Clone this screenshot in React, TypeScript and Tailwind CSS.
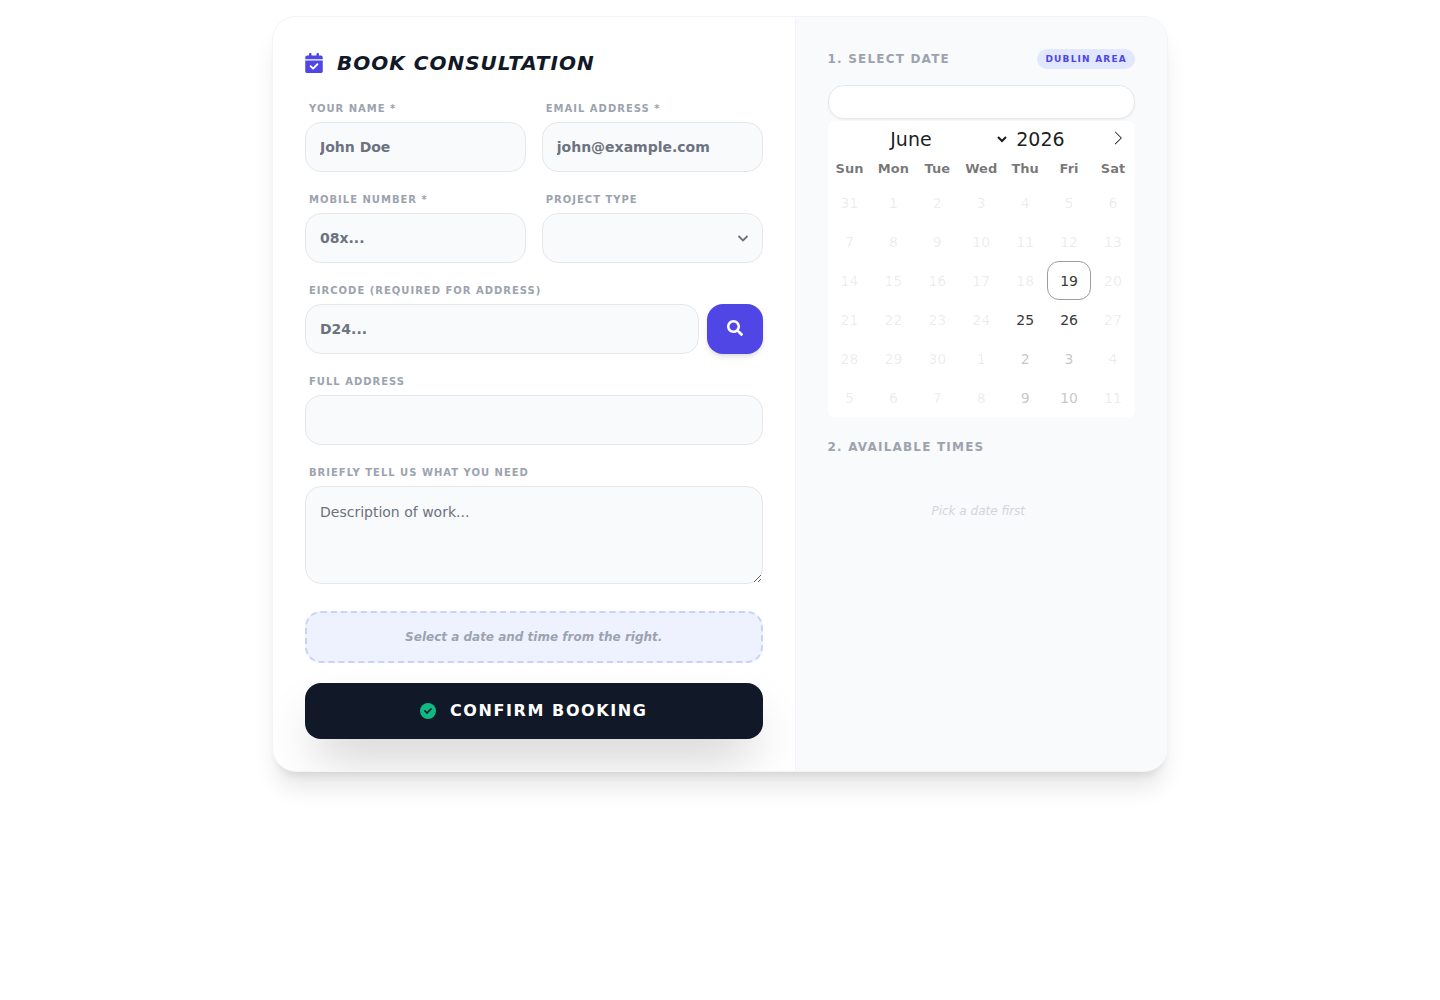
import type { ReactNode } from 'react';
import { FaSearch } from 'react-icons/fa';
import { FaCalendarCheck } from 'react-icons/fa6';

const MONTHS = ['June', 'July', 'August', 'September', 'October', 'November', 'December'];
const WEEKDAYS = ['Sun', 'Mon', 'Tue', 'Wed', 'Thu', 'Fri', 'Sat'];

const FIELD =
  'block w-full rounded-2xl border border-[#e5e7eb] bg-[#f9fafb] p-3.5 text-sm text-[#111827] outline-none placeholder:text-[#6b7280]';

type DayState = 'disabled' | 'open' | 'next' | 'today';

interface Day {
  key: number;
  label: number;
  state: DayState;
}

const DAY_STYLES: Record<DayState, string> = {
  disabled: 'border-transparent text-[#393939]/10',
  open: 'border-transparent text-[#393939]',
  next: 'border-transparent text-[#393939]/30',
  today: 'border-[#959ea9] text-[#393939]',
};

/** Six weeks starting on Sunday 31 May 2026; only Thursdays and Fridays from the 19th on are bookable. */
const WEEKS: Day[][] = Array.from({ length: 6 }, (_, week) =>
  Array.from({ length: 7 }, (_, weekday) => {
    const offset = week * 7 + weekday;
    const label = offset === 0 ? 31 : offset > 30 ? offset - 30 : offset;
    const bookable = offset >= 19 && (weekday === 4 || weekday === 5);
    let state: DayState = 'disabled';
    if (offset === 19) state = 'today';
    else if (bookable) state = offset > 30 ? 'next' : 'open';
    return { key: offset, label, state };
  }),
);

function Field({ id, label, children }: { id: string; label: string; children: ReactNode }) {
  return (
    <div className="min-w-0">
      <label
        htmlFor={id}
        className="mb-1.5 ml-1 block text-[10px] leading-[15px] font-bold tracking-widest text-[#9ca3af] uppercase"
      >
        {label}
      </label>
      {children}
    </div>
  );
}

function Calendar() {
  return (
    <div className="mt-0.5 rounded-md bg-white">
      <div className="relative flex h-[34px] items-center justify-center pt-0.5 text-[19px] leading-6 text-black/90">
        <select aria-label="Month" defaultValue="June" className="bg-transparent pr-0.5 indent-1 outline-none">
          {MONTHS.map((month) => (
            <option key={month}>{month}</option>
          ))}
        </select>
        <input
          type="text"
          inputMode="numeric"
          aria-label="Year"
          defaultValue="2026"
          className="ml-1.5 w-16 bg-transparent outline-none"
        />
        <button type="button" aria-label="Next month" className="absolute top-0 right-0 p-2.5">
          <svg viewBox="0 0 17 17" className="h-3.5 w-3.5 fill-black/90">
            <path d="M13.207 8.472l-7.854 7.854-0.707-0.707 7.146-7.146-7.146-7.148 0.707-0.707 7.854 7.854z" />
          </svg>
        </button>
      </div>
      <table className="w-full table-fixed border-collapse text-center">
        <thead>
          <tr className="h-7">
            {WEEKDAYS.map((name) => (
              <th key={name} className="p-0 text-[13px] leading-4 font-bold text-black/54">
                {name}
              </th>
            ))}
          </tr>
        </thead>
        <tbody>
          {WEEKS.map((week) => (
            <tr key={week[0].key}>
              {week.map(({ key, label, state }) => (
                <td key={key} className="p-0">
                  <button
                    type="button"
                    disabled={state === 'disabled'}
                    className={`block h-[39px] w-full rounded-xl border text-sm ${DAY_STYLES[state]}`}
                  >
                    {label}
                  </button>
                </td>
              ))}
            </tr>
          ))}
        </tbody>
      </table>
    </div>
  );
}

function BookingForm() {
  return (
    <form className="p-8 md:col-span-7" onSubmit={(event) => event.preventDefault()}>
      <h1 className="mb-6 flex items-center gap-3.5 text-xl leading-7 font-bold tracking-wider text-[#111827] uppercase italic">
        <FaCalendarCheck aria-hidden className="h-5 w-[18px] text-[#4f46e5]" />
        Book Consultation
      </h1>
      <div className="space-y-5">
        <div className="grid grid-cols-1 gap-x-4 gap-y-5 sm:grid-cols-2">
          <Field id="name" label="Your Name *">
            <input id="name" type="text" placeholder="John Doe" className={`${FIELD} font-bold`} />
          </Field>
          <Field id="email" label="Email Address *">
            <input id="email" type="email" placeholder="john@example.com" className={`${FIELD} font-bold`} />
          </Field>
          <Field id="mobile" label="Mobile Number *">
            <input id="mobile" type="tel" placeholder="08x..." className={`${FIELD} font-bold`} />
          </Field>
          <Field id="project" label="Project Type">
            <div className="relative">
              <select id="project" className={`${FIELD} h-[50px] appearance-none font-bold`} />
              <svg
                aria-hidden
                viewBox="0 0 12 12"
                className="pointer-events-none absolute top-5 right-3.5 h-3 w-3 fill-none stroke-[#6b7280]"
              >
                <path d="M1.5 3L6 7.5 10.5 3" strokeWidth="1.8" />
              </svg>
            </div>
          </Field>
        </div>
        <Field id="eircode" label="Eircode (Required for Address)">
          <div className="flex gap-2">
            <input id="eircode" type="text" placeholder="D24..." className={`${FIELD} font-bold`} />
            <button
              type="button"
              aria-label="Find address"
              className="flex w-14 shrink-0 items-center justify-center rounded-2xl bg-[#4f46e5] pb-0.5 text-white shadow-md"
            >
              <FaSearch aria-hidden className="h-4 w-4" />
            </button>
          </div>
        </Field>
        <Field id="address" label="Full Address">
          <input id="address" type="text" className={`${FIELD} font-bold`} />
        </Field>
        <Field id="details" label="Briefly tell us what you need">
          <textarea
            id="details"
            placeholder="Description of work..."
            className={`${FIELD} h-[98px] leading-[22px]`}
          />
        </Field>
      </div>
      <p className="mt-[27px] rounded-2xl border-2 border-dashed border-[#c7d2fe] bg-[#eef2ff] p-4 text-center text-xs font-bold text-[#9ca3af] italic">
        Select a date and time from the right.
      </p>
      <button
        type="submit"
        className="mt-5 flex w-full items-center justify-center gap-3.5 rounded-2xl bg-[#111827] p-4 text-base font-bold tracking-widest text-white uppercase shadow-2xl"
      >
        <svg aria-hidden viewBox="0 0 512 512" className="h-4 w-4">
          <circle cx="256" cy="256" r="256" className="fill-[#10b981]" />
          <path
            d="M160 256l64 64 128-128"
            className="fill-none stroke-[#111827]"
            strokeWidth="56"
            strokeLinecap="round"
            strokeLinejoin="round"
          />
        </svg>
        Confirm Booking
      </button>
    </form>
  );
}

function SchedulePanel() {
  return (
    <section className="border-l border-[#f3f4f6] bg-[#f9fafb] p-8 md:col-span-5">
      <h2 className="mb-4 flex items-center justify-between text-xs font-bold tracking-widest text-[#9ca3af] uppercase">
        1. Select Date
        <span className="rounded-full bg-[#e0e7ff] px-2 py-1 text-[9px] leading-3 text-[#4f46e5]">Dublin Area</span>
      </h2>
      <input
        type="text"
        readOnly
        aria-label="Selected date"
        className="block h-[34px] w-full rounded-2xl border border-[#e5e7eb] bg-white px-4 text-sm shadow-xs outline-none"
      />
      <Calendar />
      <h2 className="mt-[22px] text-xs font-bold tracking-widest text-[#9ca3af] uppercase">2. Available Times</h2>
      <p className="mt-12 pr-1.5 text-center text-xs text-[#d1d5db] italic">Pick a date first</p>
    </section>
  );
}

export default function App() {
  return (
    <main className="min-h-screen bg-white p-4 font-['DejaVu_Sans',sans-serif]">
      <div className="mx-auto grid max-w-4xl grid-cols-1 overflow-hidden rounded-3xl border border-[#f3f4f6] bg-white shadow-xl md:grid-cols-12">
        <BookingForm />
        <SchedulePanel />
      </div>
    </main>
  );
}
